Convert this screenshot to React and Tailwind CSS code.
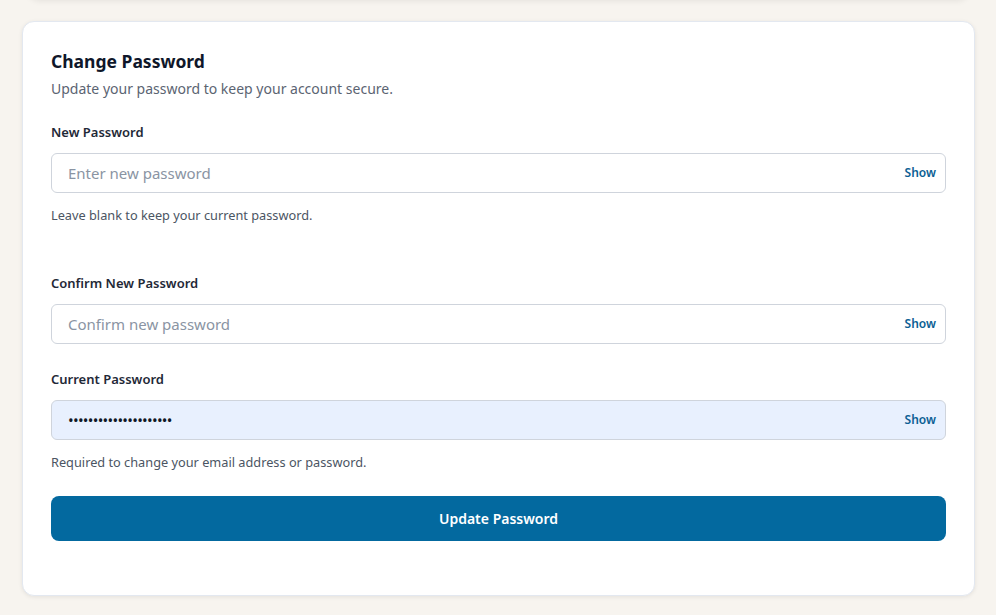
export default function App() {
  const font = { fontFamily: '"Noto Sans", "Open Sans", sans-serif' };
  const Field = ({ label, placeholder, value, filled }) => (
    <div className="flex flex-col">
      <label className="text-[13px] font-semibold text-[#1f2937] leading-[18px] mb-[12px]">{label}</label>
      <div
        className={`relative h-[40px] rounded-[6px] border border-[#cfd4dc] flex items-center ${filled ? "bg-[#e8f0fe]" : "bg-white"}`}
      >
        {filled ? (
          <span className="pl-[16px] text-[15px] text-[#111827] tracking-[-0.7px]">{value}</span>
        ) : (
          <span className="pl-[16px] text-[15px] text-[#8a94a3]">{placeholder}</span>
        )}
        <span className="absolute right-[9px] top-1/2 -translate-y-1/2 text-[12px] font-semibold text-[#0b5f94]">Show</span>
      </div>
    </div>
  );
  return (
    <div className="min-h-[615px] bg-[#f7f4ef] pl-[22px] pr-[21px] flex flex-col overflow-hidden" style={font}>
      <div className="h-[100px] -mt-[100px] mx-[6px] bg-white rounded-[12px] shadow-[0_1px_6px_rgba(0,0,0,0.08)]" />
      <div className="mt-[21px] bg-white rounded-[12px] border border-[#e3e8f0] shadow-[0_1px_4px_rgba(0,0,0,0.08)] px-[28px] pt-[27px] pb-[54px]">
        <h2 className="text-[17.5px] font-bold text-[#0f172a] leading-[24px]">Change Password</h2>
        <p className="text-[14px] text-[#5b6472] mt-[6px] leading-[20px]">Update your password to keep your account secure.</p>
        <div className="mt-[24px]">
          <Field label="New Password" placeholder="Enter new password" />
          <p className="text-[12.75px] text-[#4b5563] mt-[13px] leading-[18px]">Leave blank to keep your current password.</p>
        </div>
        <div className="mt-[50px]">
          <Field label="Confirm New Password" placeholder="Confirm new password" />
        </div>
        <div className="mt-[26px]">
          <Field label="Current Password" filled value="•••••••••••••••••••••" />
          <p className="text-[12.75px] text-[#4b5563] mt-[13px] leading-[18px]">Required to change your email address or password.</p>
        </div>
        <button className="mt-[25px] w-full h-[45px] rounded-[8px] bg-[#03699f] text-white text-[14px] font-semibold">Update Password</button>
      </div>
    </div>
  );
}
